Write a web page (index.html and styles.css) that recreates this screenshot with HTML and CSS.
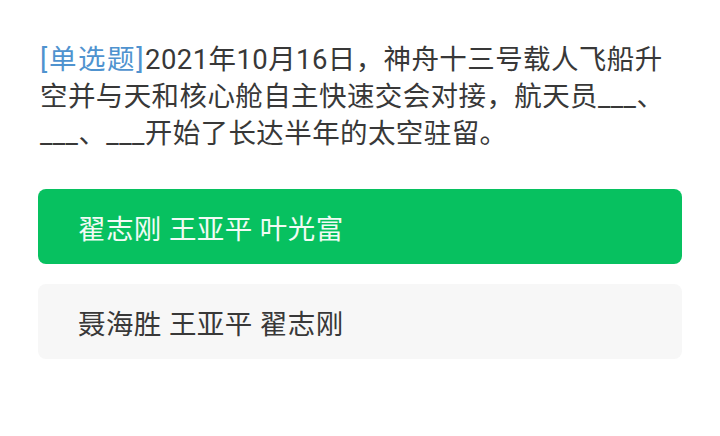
FILE: index.html
```html
<!DOCTYPE html>
<html lang="zh">
<head>
<meta charset="utf-8">
<link rel="stylesheet" href="styles.css">
</head>
<body>
<div class="page">
  <p class="question"><span class="tag">[单选题]</span>2021年10月16日，神舟十三号载人飞船升空并与天和核心舱自主快速交会对接，航天员___、___、___开始了长达半年的太空驻留。</p>
  <div class="options">
    <div class="option selected">翟志刚 王亚平 叶光富</div>
    <div class="option">聂海胜 王亚平 翟志刚</div>
  </div>
</div>
</body>
</html>
```
FILE: styles.css
```css
html, body {
  margin: 0;
  padding: 0;
  background: #ffffff;
}
body {
  font-family: Roboto, "Noto Sans CJK SC", sans-serif;
  color: #383838;
}
.page {
  padding: 41px 38px 0 38px;
}
.question {
  margin: 0 0 37px 0;
  padding: 0 2px;
  max-width: 636px;
  font-size: 27.5px;
  line-height: 37px;
  letter-spacing: 0.4px;
  color: #383838;
}
.tag {
  color: #4f93cf;
  letter-spacing: 1.6px;
}
.options {
  display: flex;
  flex-direction: column;
  gap: 20px;
}
.option {
  height: 75px;
  display: flex;
  align-items: center;
  padding-left: 40px;
  border-radius: 8px;
  background: #f7f7f7;
  font-size: 27.5px;
  letter-spacing: 0.4px;
  color: #383838;
}
.option.selected {
  background: #07c160;
  color: #f2fbf5;
}
```
